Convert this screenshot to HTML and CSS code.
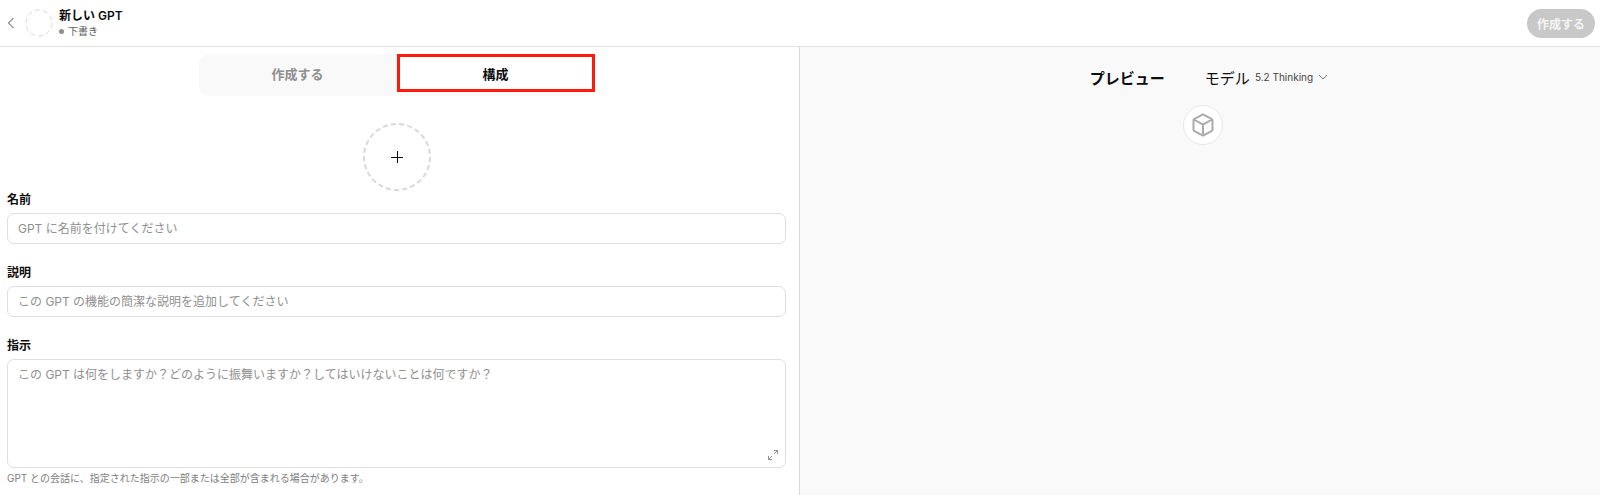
FILE: index.html
```html
<!DOCTYPE html>
<html lang="ja">
<head>
    <meta charset="UTF-8">
    <meta name="viewport" content="width=device-width, initial-scale=1.0">
    <title>新しい GPT</title>
    <link rel="stylesheet" href="styles.css">
</head>
<body>
    <header>
        <button type="button" class="back" aria-label="戻る">
            <svg width="8" height="12" viewBox="0 0 8 12"><path d="M6.5 1 1.5 6l5 5"/></svg>
        </button>
        <svg class="avatar" width="28" height="28" viewBox="0 0 28 28"><circle cx="14" cy="14" r="13" pathLength="80"/></svg>
        <div class="title">
            <h1>新しい GPT</h1>
            <p class="status">下書き</p>
        </div>
        <button type="button" class="create" disabled>作成する</button>
    </header>

    <main>
        <section class="editor">
            <div class="tabs" role="tablist">
                <button type="button" role="tab" aria-selected="false">作成する</button>
                <button type="button" role="tab" aria-selected="true" class="active">構成</button>
            </div>

            <button type="button" class="upload" aria-label="画像を追加">
                <svg width="68" height="68" viewBox="0 0 68 68">
                    <circle cx="34" cy="34" r="33" pathLength="200"/>
                    <path d="M28 34.5h12M34.5 28v12"/>
                </svg>
            </button>

            <form>
                <div class="field">
                    <label for="name">名前</label>
                    <input type="text" id="name" placeholder="GPT に名前を付けてください">
                </div>
                <div class="field">
                    <label for="description">説明</label>
                    <input type="text" id="description" placeholder="この GPT の機能の簡潔な説明を追加してください">
                </div>
                <div class="field">
                    <label for="instructions">指示</label>
                    <div class="textarea-wrap">
                        <textarea id="instructions" placeholder="この GPT は何をしますか？どのように振舞いますか？してはいけないことは何ですか？"></textarea>
                        <button type="button" class="expand" aria-label="展開">
                            <svg width="10" height="10" viewBox="0 0 10 10"><path d="M6 .5h3.500v3.500M9.500.5l-3.500 3.500M.5 6v3.500H4M.5 9.500 4 6"/></svg>
                        </button>
                    </div>
                    <p class="hint">GPT との会話に、指定された指示の一部または全部が含まれる場合があります。</p>
                </div>
            </form>
        </section>

        <section class="preview">
            <div class="preview-header">
                <h2>プレビュー</h2>
                <button type="button" class="model">
                    モデル
                    <span>5.2 Thinking</span>
                    <svg width="10" height="6" viewBox="0 0 10 6"><path d="m1 1 4 4 4-4"/></svg>
                </button>
            </div>
            <div class="cube">
                <svg width="22" height="24" viewBox="0 0 22 24">
                    <path d="M11 1.300 19.500 5.800Q20.500 6.400 20.500 7.500v9q0 1.100-1 1.700L11 22.700 2.500 18.200q-1-.6-1-1.700v-9q0-1.100 1-1.700zM2 6.500l9 5.200 9-5.200M11 11.700v11"/>
                </svg>
            </div>
        </section>
    </main>
</body>
</html>
```
FILE: styles.css
```css
* {
    margin: 0;
    padding: 0;
    box-sizing: border-box;
}

body {
    min-height: 100vh;
    display: flex;
    flex-direction: column;
    font-family: Inter, 'Noto Sans CJK JP', sans-serif;
    font-size: 12px;
    color: #0d0d0d;
    background-color: #fff;
}

button,
input,
textarea {
    font: inherit;
    color: inherit;
    border: none;
    background: none;
}

svg {
    display: block;
    fill: none;
    stroke: currentColor;
}

header {
    display: flex;
    align-items: center;
    height: 47px;
    padding: 0 5px 0 7px;
    border-bottom: 1px solid #e3e3e3;
}

.back {
    margin-right: 10px;
    color: #444;
}

.avatar,
.upload circle {
    stroke: #d9d9d9;
    stroke-width: 2;
    stroke-dasharray: 5 3;
}

.avatar {
    stroke-width: 1;
}

.title {
    margin-left: 6px;
}

h1 {
    font-size: 12px;
    line-height: 16px;
    font-weight: 600;
}

.status {
    display: flex;
    align-items: center;
    gap: 4px;
    font-size: 10px;
    line-height: 14px;
    color: #5d5d5d;
}

.status::before {
    content: "";
    width: 5px;
    height: 5px;
    border-radius: 50%;
    background-color: #8f8f8f;
}

.create {
    margin-left: auto;
    height: 29px;
    padding: 0 10px;
    border-radius: 15px;
    background-color: #c8c8c8;
    color: #f4f4f4;
    font-weight: 600;
}

main {
    flex: 1;
    display: grid;
    grid-template-columns: 1fr 1fr;
}

.editor {
    padding: 7px 13px 7px 7px;
    border-right: 1px solid #d9d9d9;
}

.tabs {
    display: grid;
    grid-template-columns: 1fr 1fr;
    align-items: start;
    width: 396px;
    height: 42px;
    margin: 0 auto;
    border-radius: 10px;
    background-color: #f9f9f9;
}

.tabs button {
    height: 38px;
    font-size: 13px;
    font-weight: 600;
    color: #8f8f8f;
}

.tabs .active {
    border: 3px solid #ff1a0a;
    background-color: #fff;
    color: #0d0d0d;
}

.upload {
    display: block;
    margin: 27px auto 0;
    border-radius: 50%;
}

.upload path {
    stroke: #0d0d0d;
}

.field {
    margin-bottom: 20px;
}

.field:last-child {
    margin-bottom: 0;
}

label {
    display: block;
    margin-bottom: 4px;
    line-height: 18px;
    font-weight: 600;
}

input,
textarea {
    display: block;
    width: 100%;
    height: 31px;
    padding: 0 10px;
    border: 1px solid #dedede;
    border-radius: 7px;
    background-color: #fff;
}

textarea {
    height: 109px;
    padding: 6px 10px;
    line-height: 18px;
    resize: none;
}

::placeholder {
    color: #8f8f8f;
}

.textarea-wrap {
    position: relative;
}

.expand {
    position: absolute;
    right: 8px;
    bottom: 8px;
    color: #8f8f8f;
}

.hint {
    margin-top: 2px;
    font-size: 10px;
    line-height: 16px;
    color: #7d7d7d;
}

.preview {
    padding: 18px 0 0 6px;
    background-color: #f9f9f9;
}

.preview-header {
    display: flex;
    align-items: center;
    justify-content: center;
    gap: 40px;
    height: 24px;
    padding-left: 12px;
}

h2 {
    font-size: 15px;
    font-weight: 600;
}

.model {
    display: flex;
    align-items: center;
    gap: 5px;
    font-size: 15px;
}

.model span {
    font-size: 10px;
    color: #444;
}

.model svg {
    color: #777;
}

.cube {
    display: flex;
    align-items: center;
    justify-content: center;
    width: 40px;
    height: 40px;
    margin: 16px auto 0;
    border: 1px solid #e8e8e8;
    border-radius: 50%;
    background-color: #fff;
    color: #ababab;
}

.cube svg {
    stroke-width: 2;
    stroke-linejoin: round;
}
```
